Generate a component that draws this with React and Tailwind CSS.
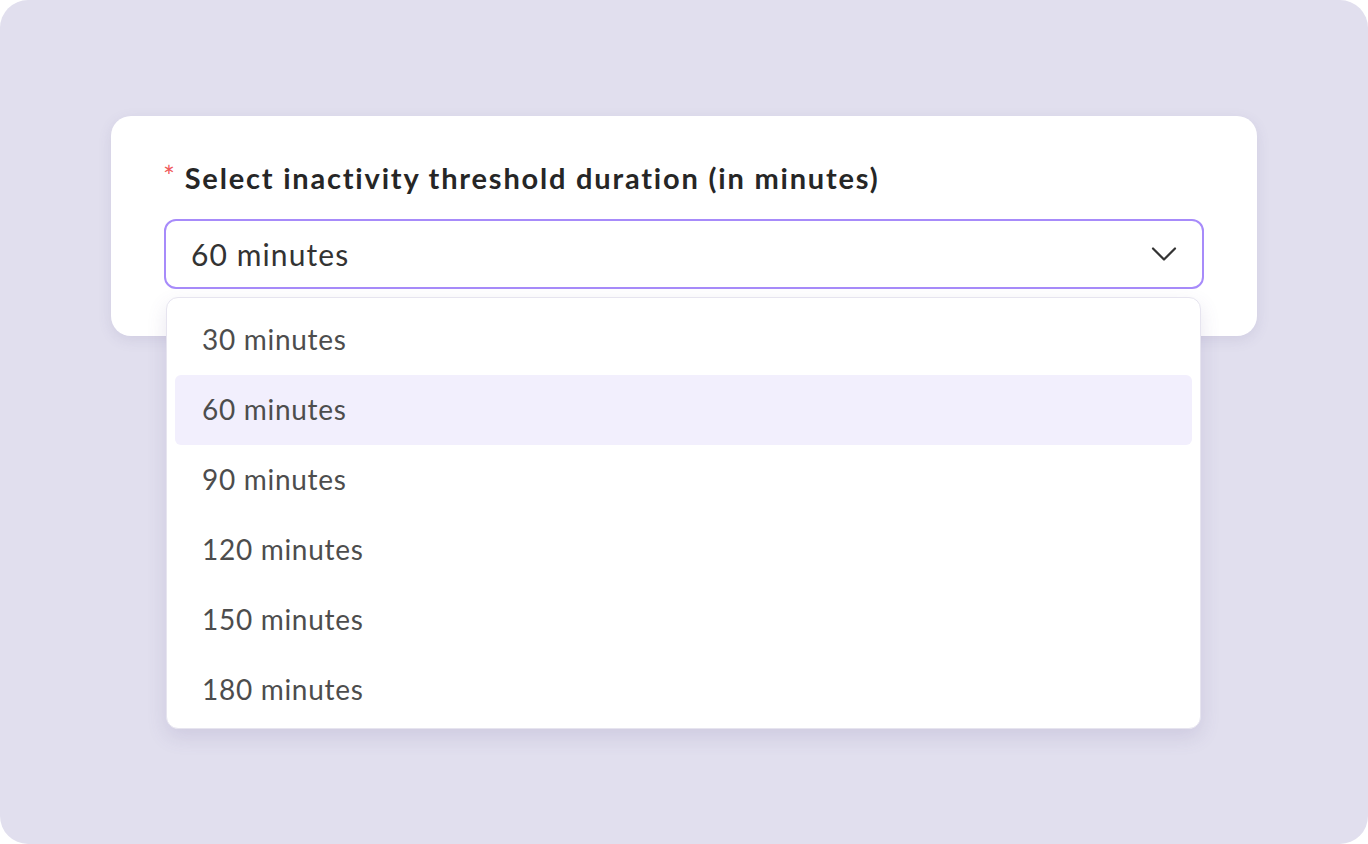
import React, { useState } from 'react';

const options = [30, 60, 90, 120, 150, 180];

function Chevron() {
  return (
    <svg width="28" height="28" viewBox="0 0 28 28" fill="none" stroke="#333333" strokeWidth="2.2" strokeLinecap="round" strokeLinejoin="round">
      <path d="M3 8.5l11 11 11-11" />
    </svg>
  );
}

export default function App() {
  const [value, setValue] = useState(60);

  return (
    <div className="w-[1368px] h-[844px] bg-white" style={{ fontFamily: 'Lato, "Open Sans", sans-serif' }}>
      <div className="w-full h-full bg-[#e1dfee] rounded-[28px] pt-[116px] px-[111px]">
        <div className="relative bg-white rounded-[20px] shadow-[0_4px_14px_rgba(90,80,140,0.12)] px-[53px] pt-[43px] pb-[47px]">
          <label className="flex items-center gap-[8px] text-[29px] font-bold text-[#262626] leading-[38px] tracking-[1.8px]">
            <span className="text-[#f05a5a] text-[28px] font-normal leading-none -mt-[4px] -ml-[1px]">*</span>
            Select inactivity threshold duration (in minutes)
          </label>

          <div className="mt-[22px] h-[70px] border-2 border-[#a78bfa] rounded-[12px] flex items-center justify-between pl-[25px] pr-[24px]">
            <span className="text-[30px] text-[#333333] tracking-[1.1px]">{value} minutes</span>
            <Chevron />
          </div>

          {/* menu */}
          <div className="absolute left-[55px] right-[56px] top-[181px] bg-white border border-[#e6e4ef] rounded-[12px] shadow-[0_8px_20px_rgba(90,80,140,0.14)] px-[8px] pt-[7px] pb-[3px] z-10">
            {options.map(o => (
              <div
                key={o}
                onClick={() => setValue(o)}
                className={`h-[70px] flex items-center pl-[27px] pb-[2px] rounded-[6px] text-[28px] text-[#4d4d4d] tracking-[0.7px] cursor-pointer ${o === value ? 'bg-[#f2effd]' : ''}`}
              >
                {o} minutes
              </div>
            ))}
          </div>
        </div>
      </div>
    </div>
  );
}
